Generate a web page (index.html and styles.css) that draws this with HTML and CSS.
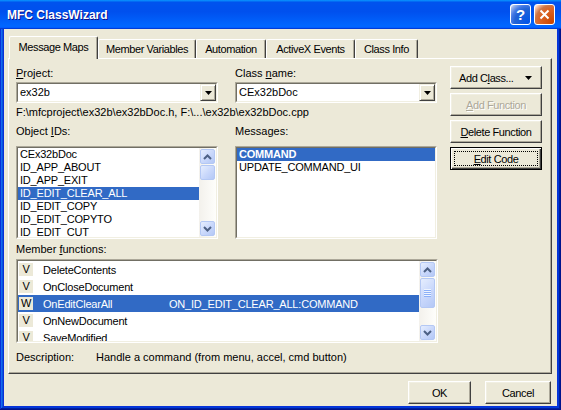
FILE: index.html
```html
<!DOCTYPE html>
<html>
<head>
<meta charset="utf-8">
<link rel="stylesheet" href="styles.css">
</head>
<body>
<div class="window">
  <div class="titlebar">
    <span class="title">MFC ClassWizard</span>
    <div class="tb-buttons">
      <span class="tb-btn help">?</span>
      <span class="tb-btn close"><svg width="11" height="11" viewBox="0 0 11 11"><path d="M1.5 1.5L9.5 9.5M9.5 1.5L1.5 9.5" stroke="#fff" stroke-width="2" fill="none"/></svg></span>
    </div>
  </div>
  <div class="client">
    <div class="tabs">
      <div class="tab t1 active">Message Maps</div>
      <div class="tab t2">Member Variables</div>
      <div class="tab t3">Automation</div>
      <div class="tab t4">ActiveX Events</div>
      <div class="tab t5">Class Info</div>
    </div>
    <div class="panel">
      <div class="form">
        <div class="lbl"><u>P</u>roject:</div>
        <div class="lbl">Class <u>n</u>ame:</div>
        <div class="combo"><div class="combo-in"><span class="ctext">ex32b</span><span class="cbtn"><svg width="7" height="4" viewBox="0 0 7 4"><polygon points="0,0 7,0 3.5,4" fill="#000"/></svg></span></div></div>
        <div class="combo"><div class="combo-in"><span class="ctext">CEx32bDoc</span><span class="cbtn"><svg width="7" height="4" viewBox="0 0 7 4"><polygon points="0,0 7,0 3.5,4" fill="#000"/></svg></span></div></div>
        <div class="path">F:\mfcproject\ex32b\ex32bDoc.h, F:\...\ex32b\ex32bDoc.cpp</div>
        <div class="lbl lbl2">Object <u>I</u>Ds:</div>
        <div class="lbl lbl2">Messages:</div>
        <div class="list"><div class="list-in">
          <div class="items">
            <div class="row">CEx32bDoc</div>
            <div class="row">ID_APP_ABOUT</div>
            <div class="row">ID_APP_EXIT</div>
            <div class="row sel">ID_EDIT_CLEAR_ALL</div>
            <div class="row">ID_EDIT_COPY</div>
            <div class="row">ID_EDIT_COPYTO</div>
            <div class="row">ID_EDIT_CUT</div>
          </div>
          <div class="sb">
            <span class="sbb"><svg width="9" height="6" viewBox="0 0 9 6"><path d="M1 5L4.5 1.5L8 5" stroke="#4D6185" stroke-width="2" fill="none"/></svg></span>
            <span class="thumb t-small"></span>
            <span class="track"></span>
            <span class="sbb down"><svg width="9" height="6" viewBox="0 0 9 6"><path d="M1 1L4.5 4.5L8 1" stroke="#4D6185" stroke-width="2" fill="none"/></svg></span>
          </div>
        </div></div>
        <div class="list"><div class="list-in">
          <div class="items">
            <div class="row sel bold">COMMAND</div>
            <div class="row">UPDATE_COMMAND_UI</div>
          </div>
        </div></div>
        <div class="lbl mlbl">Member <u>f</u>unctions:</div>
        <div class="mlist"><div class="list-in">
          <div class="items">
            <div class="mrow"><span class="ico">V</span><span class="fn">DeleteContents</span></div>
            <div class="mrow"><span class="ico">V</span><span class="fn">OnCloseDocument</span></div>
            <div class="mrow sel"><span class="ico">W</span><span class="fn">OnEditClearAll</span><span class="hd">ON_ID_EDIT_CLEAR_ALL:COMMAND</span></div>
            <div class="mrow"><span class="ico">V</span><span class="fn">OnNewDocument</span></div>
            <div class="mrow"><span class="ico">V</span><span class="fn">SaveModified</span></div>
          </div>
          <div class="sb">
            <span class="sbb"><svg width="9" height="6" viewBox="0 0 9 6"><path d="M1 5L4.5 1.5L8 5" stroke="#4D6185" stroke-width="2" fill="none"/></svg></span>
            <span class="thumb t-big"><span class="grip"></span></span>
            <span class="track"></span>
            <span class="sbb down"><svg width="9" height="6" viewBox="0 0 9 6"><path d="M1 1L4.5 4.5L8 1" stroke="#4D6185" stroke-width="2" fill="none"/></svg></span>
          </div>
        </div></div>
        <div class="desc"><span class="desc-lbl">Description:</span><span>Handle a command (from menu, accel, cmd button)</span></div>
      </div>
      <div class="side">
        <div class="btn split"><span>Add C<u>l</u>ass...</span><svg width="7" height="4" viewBox="0 0 7 4"><polygon points="0,0 7,0 3.5,4" fill="#000"/></svg></div>
        <div class="btn disabled"><span><u>A</u>dd Function</span></div>
        <div class="btn"><span><u>D</u>elete Function</span></div>
        <div class="btn default"><span class="focus"><u>E</u>dit Code</span></div>
      </div>
    </div>
    <div class="footer">
      <div class="btn ok">OK</div>
      <div class="btn cancel">Cancel</div>
    </div>
  </div>
</div>
</body>
</html>
```
FILE: styles.css
```css
* { box-sizing: border-box; }
body {
  margin: 0;
  font-family: "Liberation Sans", Arial, sans-serif;
  font-size: 11px;
  color: #000;
  background: #fff;
}
.window {
  width: 561px;
  height: 410px;
  display: flex;
  flex-direction: column;
  background: #0831d9;
  box-shadow: inset -1px -1px #00138c, inset 1px 1px #0831d9, inset -2px -2px #001ea0, inset 2px 2px #166aee, inset -3px -3px #003bda, inset 3px 3px #0855dd;
}
.titlebar {
  height: 29px;
  flex: none;
  display: flex;
  align-items: center;
  justify-content: space-between;
  padding: 0 6px 0 7px;
  background: linear-gradient(180deg, #0997ff, #0053ee 8%, #0050ee 40%, #0066ff 88%, #0066ff 93%, #005bff 95%, #003dd7 96%, #003dd7);
}
.title {
  color: #fff;
  font-weight: bold;
  font-size: 12px;
  text-shadow: 1px 1px #0f1089;
}
.tb-buttons { display: flex; gap: 3px; }
.tb-btn {
  width: 21px;
  height: 21px;
  border: 1px solid #fff;
  border-radius: 3px;
  display: flex;
  align-items: center;
  justify-content: center;
}
.help {
  background: radial-gradient(circle at 90% 90%, #0054e9 0%, #2263d5 55%, #4479e4 70%, #a3bbec 90%, #fff 100%);
  color: #fff;
  font-weight: bold;
  font-size: 15px;
}
.close {
  background: radial-gradient(circle at 90% 90%, #cc4600 0%, #dc6527 55%, #cd7546 70%, #ffccb2 90%, #fff 100%);
}
.client {
  flex: 1;
  margin: 0 4px 4px;
  background: #ECE9D8;
  display: flex;
  flex-direction: column;
  padding: 7px 5px 2px 4px;
}
.tabs {
  display: flex;
  align-items: flex-end;
  height: 22px;
  flex: none;
  padding-left: 1px;
}
.tab {
  height: 19px;
  border: 1px solid #fff;
  border-bottom: none;
  border-right-color: #404040;
  box-shadow: inset -1px 0 #ACA899;
  border-radius: 2px 2px 0 0;
  display: flex;
  align-items: center;
  justify-content: center;
  letter-spacing: -0.4px;
  background: #ECE9D8;
  white-space: nowrap;
}
.tab.active {
  height: 23px;
  margin-bottom: -1px;
  position: relative;
  z-index: 1;
  padding-bottom: 2px;
}
.t1 { width: 89px; }
.t2 { width: 98px; }
.t3 { width: 70px; }
.t4 { width: 89px; }
.t5 { width: 63px; }
.panel {
  height: 316px;
  flex: none;
  display: flex;
  border: 1px solid;
  border-color: #fff #404040 #404040 #fff;
  box-shadow: inset -1px -1px #ACA899;
  padding: 8px 9px 0 7px;
}
.form {
  width: 421px;
  display: grid;
  grid-template-columns: 202px 202px;
  column-gap: 17px;
  align-content: start;
}
.lbl { line-height: 13px; white-space: nowrap; }
.lbl2 { margin-top: 6px; }
.combo {
  margin-top: 2px;
  height: 21px;
  border: 1px solid;
  border-color: #ACA899 #fff #fff #ACA899;
}
.combo-in {
  height: 100%;
  border: 1px solid;
  border-color: #716F64 #F1EFE2 #F1EFE2 #716F64;
  background: #fff;
  display: flex;
}
.ctext { flex: 1; padding-left: 2px; line-height: 17px; }
.cbtn {
  width: 16px;
  height: 17px;
  border: 1px solid;
  border-color: #F1EFE2 #404040 #404040 #F1EFE2;
  box-shadow: inset 1px 1px #fff, inset -1px -1px #ACA899;
  background: #ECE9D8;
  display: flex;
  align-items: center;
  justify-content: center;
}
.path {
  grid-column: span 2;
  margin-top: 3px;
  line-height: 13px;
  white-space: nowrap;
}
.list, .mlist {
  margin-top: 8px;
  height: 93px;
  border: 1px solid;
  border-color: #ACA899 #fff #fff #ACA899;
}
.mlist {
  grid-column: span 2;
  margin-top: 3px;
  height: 84px;
  width: 422px;
}
.list-in {
  height: 100%;
  border: 1px solid;
  border-color: #716F64 #F1EFE2 #F1EFE2 #716F64;
  background: #fff;
  display: flex;
  overflow: hidden;
}
.items { flex: 1; overflow: hidden; }
.row {
  height: 13px;
  line-height: 13px;
  padding-left: 2px;
  white-space: nowrap;
  letter-spacing: -0.2px;
}
.row.sel, .mrow.sel { background: #316AC5; color: #fff; }
.bold { font-weight: bold; }
.sb {
  width: 17px;
  flex: none;
  display: flex;
  flex-direction: column;
  background: linear-gradient(90deg, #F3F1EC, #FEFEFB);
}
.sbb, .thumb {
  height: 15px;
  margin: 1px 1px 0;
  border: 1px solid #B4C8F4;
  border-radius: 2px;
  background: linear-gradient(135deg, #E6EEFE 0%, #C8D7FB 55%, #B4C8F6 100%);
  display: flex;
  align-items: center;
  justify-content: center;
  flex: none;
}
.sbb.down { margin: 0 1px 1px; }
.t-small { height: 15px; }
.t-big { height: 30px; }
.grip {
  width: 7px;
  height: 8px;
  background: repeating-linear-gradient(180deg, #EEF4FE 0 1px, #8CB0F8 1px 2px);
}
.track { flex: 1; }
.mlbl { grid-column: span 2; margin-top: 4px; }
.mrow {
  height: 17px;
  display: flex;
  align-items: center;
  white-space: nowrap;
  letter-spacing: -0.2px;
}
.ico {
  width: 14px;
  height: 13px;
  margin-left: 1px;
  background: #ECE9D8;
  color: #000;
  display: flex;
  align-items: center;
  justify-content: center;
  line-height: 13px;
}
.fn { margin-left: 10px; width: 126px; }
.desc {
  grid-column: span 2;
  margin-top: 8px;
  display: flex;
  line-height: 13px;
  white-space: nowrap;
}
.desc-lbl { width: 80px; }
.side {
  margin-left: 13px;
  margin-top: -1px;
  width: 92px;
  display: flex;
  flex-direction: column;
  gap: 4px;
}
.btn {
  height: 23px;
  flex: none;
  border: 1px solid;
  border-color: #fff #404040 #404040 #fff;
  box-shadow: inset -1px -1px #ACA899, inset 1px 1px #F1EFE2;
  background: #ECE9D8;
  display: flex;
  align-items: center;
  justify-content: center;
  letter-spacing: -0.4px;
  white-space: nowrap;
}
.btn.split { justify-content: space-between; padding: 0 9px 0 8px; }
.btn.disabled { color: #ACA899; text-shadow: 1px 1px #fff; }
.btn.default {
  border: 1px solid #000;
  box-shadow: inset 1px 1px #fff, inset -1px -1px #404040, inset -2px -2px #ACA899;
  padding: 3px;
}
.focus {
  flex: 1;
  align-self: stretch;
  border: 1px dotted #000;
  display: flex;
  align-items: center;
  justify-content: center;
}
.footer {
  display: flex;
  justify-content: flex-end;
  gap: 14px;
  margin-top: 7px;
  padding-right: 1px;
}
.ok { width: 63px; }
.cancel { width: 66px; }
```
